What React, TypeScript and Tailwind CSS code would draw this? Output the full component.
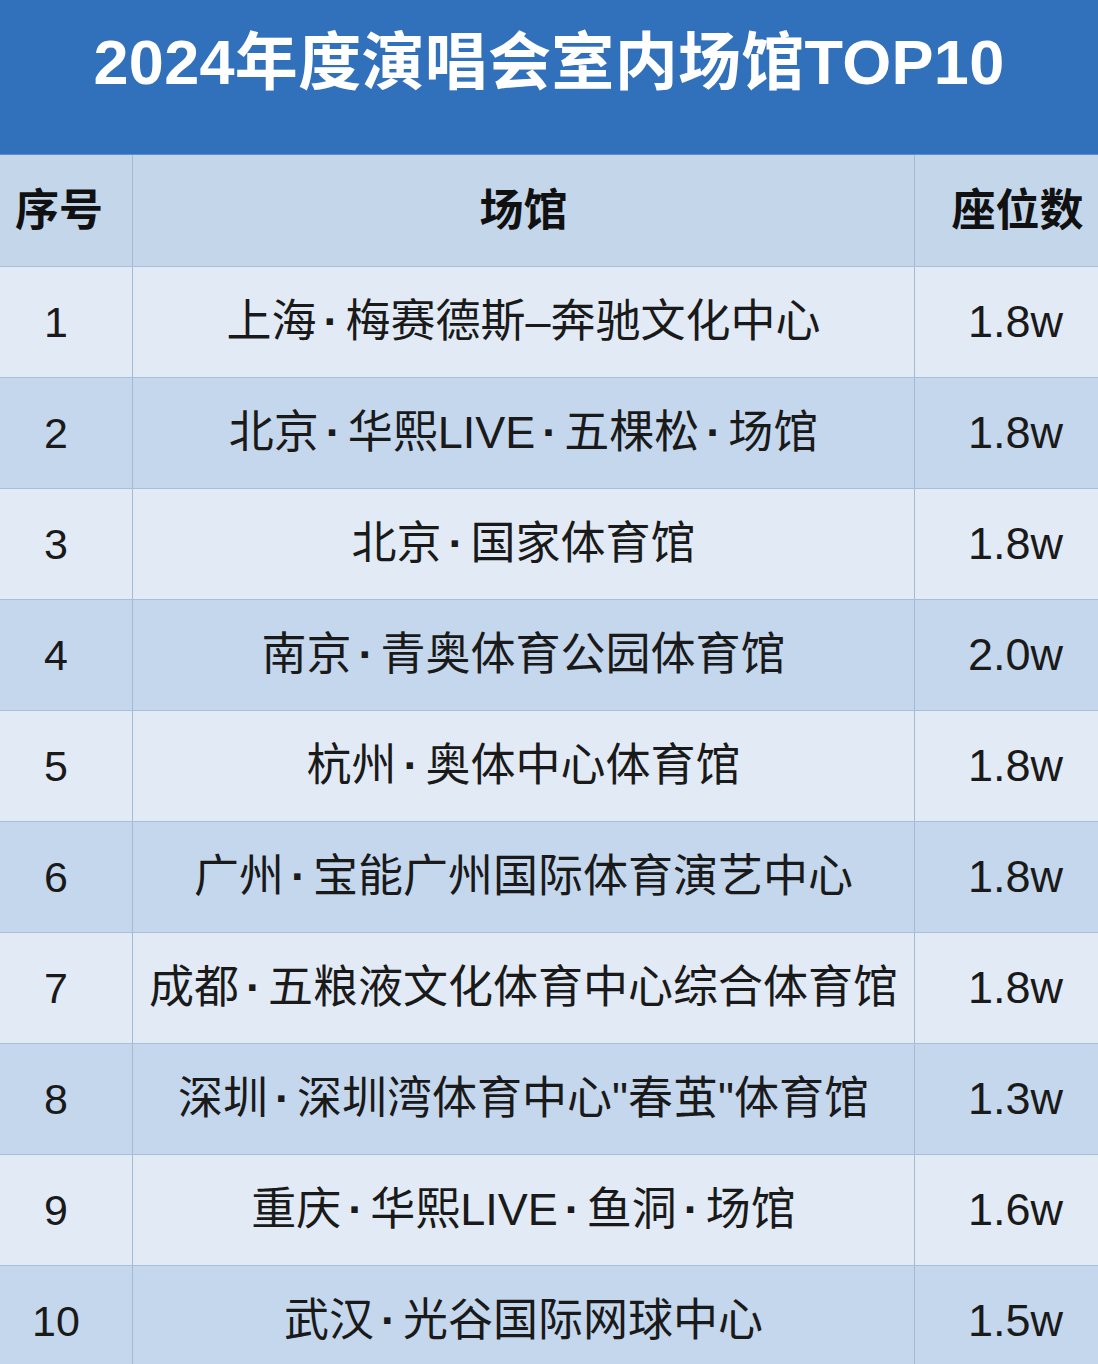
const rows = [
  ['1', '上海·梅赛德斯–奔驰文化中心', '1.8w'],
  ['2', '北京·华熙LIVE·五棵松·场馆', '1.8w'],
  ['3', '北京·国家体育馆', '1.8w'],
  ['4', '南京·青奥体育公园体育馆', '2.0w'],
  ['5', '杭州·奥体中心体育馆', '1.8w'],
  ['6', '广州·宝能广州国际体育演艺中心', '1.8w'],
  ['7', '成都·五粮液文化体育中心综合体育馆', '1.8w'],
  ['8', '深圳·深圳湾体育中心"春茧"体育馆', '1.3w'],
  ['9', '重庆·华熙LIVE·鱼洞·场馆', '1.6w'],
  ['10', '武汉·光谷国际网球中心', '1.5w'],
]

// the dots in the venue names sit with a bit of air on each side
function Venue({ name }: { name: string }) {
  const parts = name.split('·')
  return (
    <>
      {parts.map((p, i) => (
        <span key={i}>
          {i > 0 && <span className="mx-[7px] font-bold">·</span>}
          {p}
        </span>
      ))}
    </>
  )
}

export default function App() {
  return (
    <div
      className="w-[1098px] h-[1364px] overflow-hidden bg-[#c4d7ec]"
      style={{ fontFamily: '"Liberation Sans", "Noto Sans CJK SC", sans-serif' }}
    >
      {/* title band */}
      <div className="h-[155px] bg-[#3170bb] flex items-start justify-center pt-[31px] border-b border-[#5b8fd0]">
        <h1 className="text-white text-[63px] font-bold leading-none tracking-[0.3px]">
          2024年度演唱会室内场馆TOP10
        </h1>
      </div>

      {/* column headings */}
      <div className="grid grid-cols-[133px_782px_183px] h-[112px] bg-[#c3d6ea] border-b border-[#a9bfd8] text-[#111] text-[44px] font-bold">
        <div className="flex items-center justify-center pr-[14px] border-r border-[#a3bad4]">序号</div>
        <div className="flex items-center justify-center border-r border-[#a3bad4]">场馆</div>
        <div className="flex items-center justify-center pl-[22px]">座位数</div>
      </div>

      {rows.map(([no, venue, seats], i) => (
        <div
          key={no}
          className={`grid grid-cols-[133px_782px_183px] h-[111px] border-b border-[#a9bfd8] text-[#1a1a1a] ${
            i % 2 === 0 ? 'bg-[#e2ebf5]' : 'bg-[#c4d7ec]'
          }`}
        >
          <div className="flex items-center justify-center pr-[20px] text-[43px] border-r border-[#a3bad4]">{no}</div>
          <div className="flex items-center justify-center text-[45px] whitespace-nowrap border-r border-[#a3bad4]">
            <Venue name={venue} />
          </div>
          <div className="flex items-center justify-center pl-[18px] text-[45px]">{seats}</div>
        </div>
      ))}
    </div>
  )
}
